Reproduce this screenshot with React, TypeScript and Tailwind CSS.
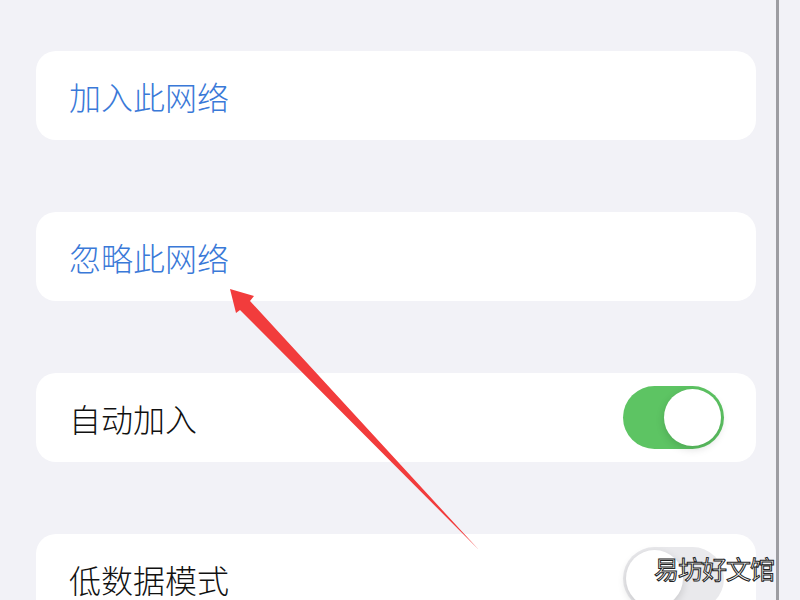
import React from 'react'

const font = { fontFamily: '"Noto Sans CJK SC", "Noto Sans", sans-serif' }

function Toggle({ on }: { on: boolean }) {
  return (
    <div
      className={
        on
          ? 'w-[101px] h-[63px] rounded-full bg-[#5dc463] p-[3px] flex justify-end'
          : 'w-[101px] h-[63px] rounded-full bg-[#e9e9ec] p-[3px] flex justify-start'
      }
    >
      <div className="w-[57px] h-[57px] rounded-full bg-white shadow-[0_3px_8px_rgba(0,0,0,0.15)]" />
    </div>
  )
}

function Row({ label, blue, toggle }: { label: string; blue?: boolean; toggle?: 'on' | 'off' }) {
  return (
    <div className="h-[89px] shrink-0 bg-white rounded-[20px] pl-[33px] pr-[32px] flex items-center justify-between">
      <span
        className={blue ? 'text-[32px] font-light text-[#3a79d8]' : 'text-[32px] font-light text-[#111111]'}
        style={font}
      >
        {label}
      </span>
      {toggle && <Toggle on={toggle === 'on'} />}
    </div>
  )
}

export default function App() {
  return (
    <div className="relative w-[800px] h-[600px] overflow-hidden bg-[#f2f2f7] flex">
      <div className="w-[776px] h-full pl-[36px] pr-[20px] pt-[51px] flex flex-col gap-[72px]">
        <Row label="加入此网络" blue />
        <Row label="忽略此网络" blue />
        <Row label="自动加入" toggle="on" />
        <Row label="低数据模式" toggle="off" />
      </div>
      <div className="w-[3px] h-full bg-[#9d9da2]" />
      <div className="flex-1 h-full bg-[#f2f2f7]" />

      {/* red annotation arrow */}
      <svg className="absolute inset-0 pointer-events-none" width="800" height="600" viewBox="0 0 800 600">
        <path d="M230 289 L254 296 L250 301 L479 550 L240 310 L236 313 Z" fill="#f23c3c" />
      </svg>

      {/* watermark */}
      <div
        className="absolute left-[654px] top-[550px] text-[25px] text-white tracking-[-1px]"
        style={{
          ...font,
          WebkitTextStroke: '1px #222',
        }}
      >
        易坊好文馆
      </div>
    </div>
  )
}
